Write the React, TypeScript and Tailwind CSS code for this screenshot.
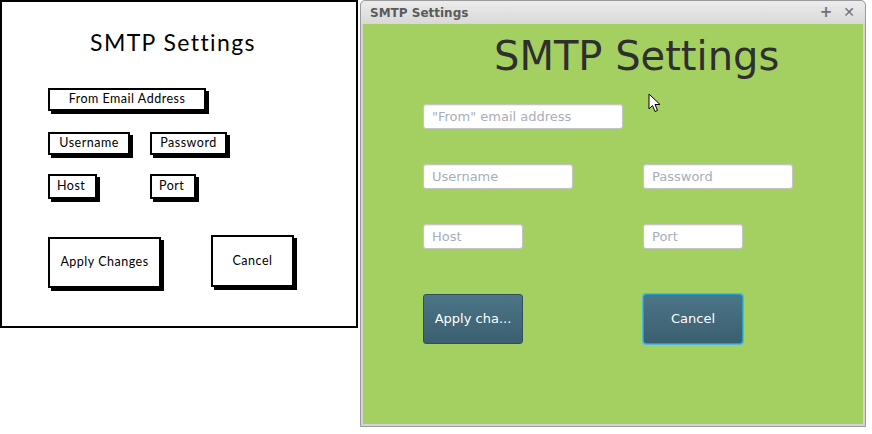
import React from "react";

const sketchBox =
	"flex items-center justify-center border-2 border-black bg-white text-[12.5px] tracking-[0.5px] text-black shadow-[3px_3px_0_#000]";

function Mockup() {
	return (
		<div className="flex h-[328px] w-[358px] shrink-0 flex-col border-2 border-black bg-white pt-[25px] pl-[46px] font-['Lato',sans-serif]">
			<div className="ml-[42px] h-[30px] text-[23px] leading-[30px] tracking-[1.4px] text-black">SMTP Settings</div>
			<div className={`${sketchBox} mt-[31px] h-[23px] w-[158px]`}>From Email Address</div>
			<div className="mt-[21px] flex gap-[20px]">
				<div className={`${sketchBox} h-[23px] w-[82px]`}>Username</div>
				<div className={`${sketchBox} h-[23px] w-[77px]`}>Password</div>
			</div>
			<div className="mt-[19px] flex gap-[53px]">
				<div className={`${sketchBox} h-[25px] w-[49px] justify-start pl-[7px]`}>Host</div>
				<div className={`${sketchBox} h-[25px] w-[46px] justify-start pl-[7px]`}>Port</div>
			</div>
			<div className="mt-[36px] flex items-start gap-[50px]">
				<div className={`${sketchBox} mt-[2px] h-[51px] w-[113px]`}>Apply Changes</div>
				<div className={`${sketchBox} h-[52px] w-[83px]`}>Cancel</div>
			</div>
		</div>
	);
}

function Field({ placeholder, width }: { placeholder: string; width: string }) {
	return (
		<div
			className={`flex h-[25px] ${width} items-center rounded-[3px] border border-[#c4c4c4] bg-white pt-[1px] pl-[8px] text-[13px] text-[#a7adbb] shadow-[inset_0_1px_1px_rgba(0,0,0,0.08)]`}
		>
			{placeholder}
		</div>
	);
}

function FxWindow() {
	return (
		<div className="relative ml-[2px] flex h-[427px] w-[506px] shrink-0 flex-col rounded-t-[5px] border border-[#9a9a9a] bg-[#d4d4d4] font-['DejaVu_Sans',sans-serif]">
			<div className="flex h-[23px] items-center rounded-t-[5px] bg-[linear-gradient(#ececec,#d8d8d8)] px-[9px]">
				<span className="flex-1 text-[12px] font-bold text-[#5a5a5a]">SMTP Settings</span>
				<span className="mr-[11px] text-[15px] font-bold text-[#707070]">+</span>
				<span className="mr-[1px] text-[14px] text-[#707070]">✕</span>
			</div>
			<div className="mx-[2px] mb-[2px] flex flex-1 flex-col bg-[#a4cf61] pl-[60px]">
				<div className="mt-[9px] ml-[71px] h-[46px] text-[40px] leading-[46px] text-[#2f2f2f]">SMTP Settings</div>
				<div className="mt-[25px]">
					<Field placeholder={'"From" email address'} width="w-[200px]" />
				</div>
				<div className="mt-[35px] flex gap-[70px]">
					<Field placeholder="Username" width="w-[150px]" />
					<Field placeholder="Password" width="w-[150px]" />
				</div>
				<div className="mt-[35px] flex gap-[120px]">
					<Field placeholder="Host" width="w-[100px]" />
					<Field placeholder="Port" width="w-[100px]" />
				</div>
				<div className="mt-[45px] flex gap-[120px]">
					<button className="flex h-[50px] w-[100px] items-center justify-center rounded-[3px] border border-[#2f4f5d] bg-[linear-gradient(#4b7587,#3b5f6f)] text-[13px] text-white">
						Apply cha...
					</button>
					<button className="flex h-[50px] w-[100px] items-center justify-center rounded-[3px] border border-[#1d9fd0] bg-[linear-gradient(#4b7587,#3b5f6f)] text-[13px] text-white shadow-[0_0_0_1px_#4fb8dd]">
						Cancel
					</button>
				</div>
			</div>
			<svg className="absolute left-[287px] top-[92px]" width="13" height="20" viewBox="0 0 13 20">
				<path d="M1 1 L1 16 L4.5 12.5 L7 18.5 L9.5 17.5 L7 11.5 L12 11.5 Z" fill="#fff" stroke="#000" strokeWidth="1" strokeLinejoin="round" />
			</svg>
		</div>
	);
}

export default function App() {
	return (
		<div className="flex h-[434px] w-[872px] items-start bg-white">
			<Mockup />
			<FxWindow />
		</div>
	);
}
